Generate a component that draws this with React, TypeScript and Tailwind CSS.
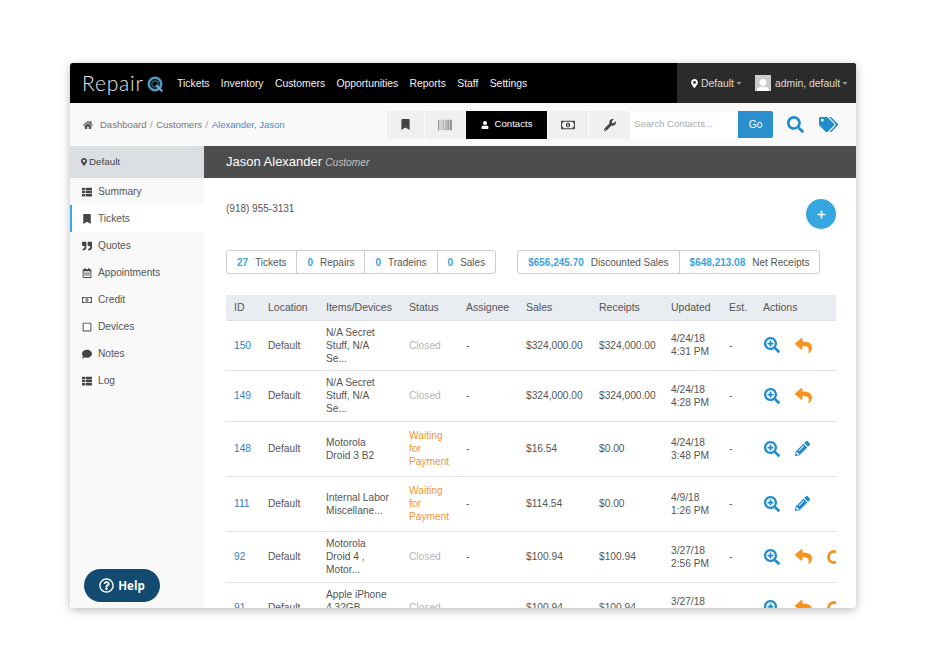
import { FaBookmark, FaBarcode, FaUser, FaRegMoneyBillAlt, FaWrench, FaSearch, FaTags, FaHome, FaMapMarkerAlt, FaThList, FaQuoteRight, FaRegCalendarAlt, FaRegSquare, FaComment, FaSearchPlus, FaReply, FaPencilAlt, FaPlus, FaRegQuestionCircle, FaCaretDown } from 'react-icons/fa'

const navLinks = ['Tickets', 'Inventory', 'Customers', 'Opportunities', 'Reports', 'Staff', 'Settings']

const sideItems = [
  { label: 'Summary', icon: FaThList },
  { label: 'Tickets', icon: FaBookmark, active: true },
  { label: 'Quotes', icon: FaQuoteRight },
  { label: 'Appointments', icon: FaRegCalendarAlt },
  { label: 'Credit', icon: FaRegMoneyBillAlt },
  { label: 'Devices', icon: FaRegSquare },
  { label: 'Notes', icon: FaComment },
  { label: 'Log', icon: FaThList },
]

const rows = [
  { id: '150', items: ['N/A Secret', 'Stuff, N/A', 'Se...'], status: ['Closed'], sales: '$324,000.00', receipts: '$324,000.00', date: '4/24/18', time: '4:31 PM', h: 'h-[50px]', acts: 'reply' },
  { id: '149', items: ['N/A Secret', 'Stuff, N/A', 'Se...'], status: ['Closed'], sales: '$324,000.00', receipts: '$324,000.00', date: '4/24/18', time: '4:28 PM', h: 'h-[51px]', acts: 'reply' },
  { id: '148', items: ['Motorola', 'Droid 3 B2'], status: ['Waiting', 'for', 'Payment'], sales: '$16.54', receipts: '$0.00', date: '4/24/18', time: '3:48 PM', h: 'h-[55px]', acts: 'edit' },
  { id: '111', items: ['Internal Labor', 'Miscellane...'], status: ['Waiting', 'for', 'Payment'], sales: '$114.54', receipts: '$0.00', date: '4/9/18', time: '1:26 PM', h: 'h-[55px]', acts: 'edit' },
  { id: '92', items: ['Motorola', 'Droid 4 ,', 'Motor...'], status: ['Closed'], sales: '$100.94', receipts: '$100.94', date: '3/27/18', time: '2:56 PM', h: 'h-[51px]', acts: 'all' },
  { id: '91', items: ['Apple iPhone', '4 32GB', 'Motor...'], status: ['Closed'], sales: '$100.94', receipts: '$100.94', date: '3/27/18', time: '2:48 PM', h: 'h-[51px]', acts: 'all' },
]

const headers = [
  ['ID', 'w-[34px]'],
  ['Location', 'w-[58px]'],
  ['Items/Devices', 'w-[83px]'],
  ['Status', 'w-[57px]'],
  ['Assignee', 'w-[60px]'],
  ['Sales', 'w-[73px]'],
  ['Receipts', 'w-[72px]'],
  ['Updated', 'w-[58px]'],
  ['Est.', 'w-[34px]'],
  ['Actions', 'w-[81px]'],
]

function Stat({ value, label, last }: { value: string; label: string; last?: boolean }) {
  return (
    <div className={`flex items-center gap-[7px] px-[10px] h-full pt-px whitespace-nowrap text-[10px] ${last ? '' : 'border-r border-[#ccc]'}`}>
      <span className="font-bold text-[#3aa3e0]">{value}</span>
      <span>{label}</span>
    </div>
  )
}

export default function App() {
  return (
    <div className="w-[925px] h-[671px] bg-white pt-[63px] pl-[70px] font-['Liberation_Sans',sans-serif] text-[10.2px] text-[#555]">
      <div className="relative w-[786px] h-[545px] overflow-hidden rounded-[3px] shadow-[0_2px_10px_rgba(0,0,0,0.28)] bg-white flex flex-col">
        <header className="h-10 shrink-0 bg-black flex items-center text-[#f2f2f2] text-[10.4px] whitespace-nowrap">
          <div className="flex items-center w-[98px] pl-3">
            <span className="font-['Lato',sans-serif] font-light text-[21px] tracking-[0.8px] text-[#e8e8e8]">Repair</span>
            <svg width="17" height="17" viewBox="0 0 17 17" fill="none" className="ml-[3px] mt-[2px] shrink-0">
              <circle cx="8" cy="8" r="6.2" stroke="#4a9cc0" strokeWidth="2.6" />
              <circle cx="8" cy="8" r="3.2" stroke="#2d6f8c" strokeWidth="1.2" />
              <path d="M9 9l6.5 6.5" stroke="#6fb3d0" strokeWidth="1.8" />
            </svg>
          </div>
          <nav className="flex items-center gap-[11.3px] ml-[9px] pt-px">
            {navLinks.map(n => <span key={n}>{n}</span>)}
          </nav>
          <div className="ml-auto w-[179px] h-full bg-[#2b2b2b] flex items-center pl-[13px] text-[#ddd]">
            <FaMapMarkerAlt className="text-white text-[9px] mr-[2px]" />
            <span className="pt-px">Default</span>
            <FaCaretDown className="text-[#999] text-[8px] ml-[1px]" />
            <div className="w-4 h-4 bg-[#ccc] ml-[12px] mr-[4px] overflow-hidden flex items-end justify-center">
              <FaUser className="text-white text-[14px] translate-y-[2px]" />
            </div>
            <span className="pt-px">admin, default</span>
            <FaCaretDown className="text-[#999] text-[8px] ml-[1px]" />
          </div>
        </header>

        <div className="h-[43px] shrink-0 bg-[#f9f9f9] flex items-center pl-[13px] whitespace-nowrap">
          <FaHome className="text-[#555] text-[10px] mr-[7px]" />
          <div className="pt-[2px] flex text-[9.5px]">
            <span className="text-[#777]">Dashboard</span>
            <span className="text-[#999] mx-[3.5px]">/</span>
            <span className="text-[#777]">Customers</span>
            <span className="text-[#999] mx-[3.5px]">/</span>
            <span className="text-[#3d8fd1]">Alexander, Jason</span>
          </div>
          <div className="ml-auto flex items-center h-[28px]">
            <div className="flex gap-px mr-px">
              <div className="w-[37px] h-[28px] bg-[#f0f0f0] flex items-center justify-center text-[#444]"><FaBookmark className="text-[11px]" /></div>
              <div className="w-[40px] h-[28px] bg-[#f0f0f0] flex items-center justify-center text-[#777]"><FaBarcode className="text-[14px]" /></div>
            </div>
            <div className="w-[81px] h-[28px] bg-black text-white flex items-center justify-center gap-[6px] text-[9.6px]">
              <FaUser className="text-[8px]" />
              <span>Contacts</span>
            </div>
            <div className="flex gap-px ml-px">
              <div className="w-[40px] h-[28px] bg-[#f0f0f0] flex items-center justify-center text-[#444]"><FaRegMoneyBillAlt className="text-[14px]" /></div>
              <div className="w-[41px] h-[28px] bg-[#f0f0f0] flex items-center justify-center text-[#444]"><FaWrench className="text-[12px]" /></div>
            </div>
            <div className="w-[108px] h-[28px] bg-white flex items-center pl-[4px] text-[#aaa] text-[9.6px]">Search Contacts...</div>
            <div className="w-[35px] h-[27px] bg-[#2a8fcd] text-white rounded-r-[2px] flex items-center justify-center">Go</div>
            <FaSearch className="text-[#1f8ccb] text-[17px] ml-[14px]" />
            <FaTags className="text-[#1f8ccb] text-[19px] ml-[15px] mr-[18px]" />
          </div>
        </div>

        <div className="flex flex-1 min-h-0">
          <aside className="w-[134px] shrink-0 bg-[#f9f9f9]">
            <div className="h-8 bg-[#dbdfe3] flex items-center pl-[10px] gap-px text-[#444] text-[9.8px]">
              <FaMapMarkerAlt className="text-[8px]" />
              <span>Default</span>
            </div>
            <ul className="text-[#555]">
              {sideItems.map(s => {
                const Icon = s.icon
                return (
                  <li key={s.label} className={`h-[27px] flex items-center ${s.active ? 'bg-white border-l-2 border-[#3aa8e0] pl-[10px]' : 'pl-[12px]'}`}>
                    <span className="w-[16px] flex"><Icon className="text-[10px] text-[#444]" /></span>
                    <span>{s.label}</span>
                  </li>
                )
              })}
            </ul>
          </aside>

          <main className="flex-1 min-w-0 flex flex-col">
            <div className="h-8 shrink-0 bg-[#4d4d4d] flex items-center pl-[22px] text-white">
              <span className="text-[13px]">Jason Alexander</span>
              <span className="italic text-[#c4c4c4] text-[10.2px] ml-[3px] mt-px">Customer</span>
            </div>
            <div className="pl-[22px] pr-[20px]">
              <div className="h-[72px] flex justify-between">
                <div className="pt-[23px] text-[10px]">(918) 955-3131</div>
                <div className="w-[30px] h-[30px] mt-[21px] rounded-full bg-[#35a6df] text-white flex items-center justify-center">
                  <FaPlus className="text-[9px]" />
                </div>
              </div>
              <div className="flex gap-[21px]">
                <div className="flex items-center h-6 border border-[#ccc] rounded-[3px]">
                  <Stat value="27" label="Tickets" />
                  <Stat value="0" label="Repairs" />
                  <Stat value="0" label="Tradeins" />
                  <Stat value="0" label="Sales" last />
                </div>
                <div className="flex items-center h-6 border border-[#ccc] rounded-[3px]">
                  <Stat value="$656,245.70" label="Discounted Sales" />
                  <Stat value="$648,213.08" label="Net Receipts" last />
                </div>
              </div>
              <table className="mt-[21px] w-[610px] table-fixed border-collapse">
                <thead>
                  <tr className="h-[25px] bg-[#e9ecf1] border-b border-[#dcdfe3]">
                    {headers.map(([h, w]) => (
                      <th key={h} className={`${w} pl-[8px] pt-px text-left font-normal text-[10.5px] text-[#555]`}>{h}</th>
                    ))}
                  </tr>
                </thead>
                <tbody>
                  {rows.map(r => (
                    <tr key={r.id} className={`${r.h} border-b border-[#e2e2e2] leading-[13px]`}>
                      <td className="pl-[8px] text-[#2f80c4]">{r.id}</td>
                      <td className="pl-[8px]">Default</td>
                      <td className="pl-[8px]">{r.items.map(t => <div key={t}>{t}</div>)}</td>
                      <td className={`pl-[8px] ${r.status.length > 1 ? 'text-[#f0962e]' : 'text-[#b5b5b5]'}`}>{r.status.map(t => <div key={t}>{t}</div>)}</td>
                      <td className="pl-[8px]">-</td>
                      <td className="pl-[8px]">{r.sales}</td>
                      <td className="pl-[8px]">{r.receipts}</td>
                      <td className="pl-[8px]"><div>{r.date}</div><div>{r.time}</div></td>
                      <td className="pl-[8px]">-</td>
                      <td className="pl-[9px] overflow-hidden">
                        <div className="flex items-center">
                          <FaSearchPlus className="text-[#1f8ccb] text-[16px] shrink-0" />
                          {r.acts === 'edit'
                            ? <FaPencilAlt className="text-[#1f8ccb] text-[15px] ml-[15px] shrink-0" />
                            : <FaReply className="text-[#f7931e] text-[17px] ml-[15px] shrink-0" />}
                          {r.acts === 'all' && (
                            <svg width="14" height="14" viewBox="0 0 14 14" fill="none" className="ml-[15px] shrink-0">
                              <circle cx="7" cy="7" r="5.5" stroke="#f7931e" strokeWidth="2.8" />
                            </svg>
                          )}
                        </div>
                      </td>
                    </tr>
                  ))}
                </tbody>
              </table>
            </div>
          </main>
        </div>

        <div className="absolute left-[14px] bottom-[6px] w-[76px] h-[33px] rounded-full bg-[#134b70] text-white flex items-center justify-center gap-[4px] font-['Open_Sans',sans-serif] font-bold text-[11.5px]">
          <FaRegQuestionCircle className="text-[15px]" />
          <span>Help</span>
        </div>
      </div>
    </div>
  )
}
